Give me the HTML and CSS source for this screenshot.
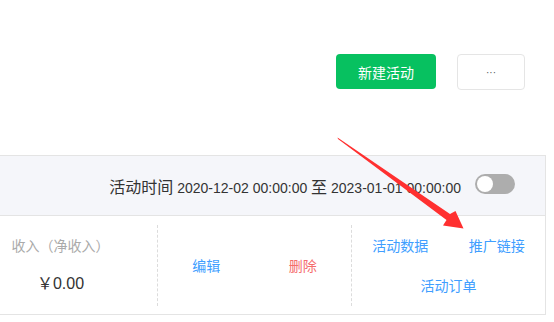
FILE: index.html
```html
<!DOCTYPE html>
<html lang="zh">
<head>
<meta charset="utf-8">
<link rel="stylesheet" href="styles.css">
</head>
<body>
<div class="page">
  <div class="toolbar">
    <button class="btn btn-primary">新建活动</button>
    <button class="btn btn-more">···</button>
  </div>
  <div class="card">
    <div class="card-head">
      <div class="time"><span class="time-label">活动时间</span> <span class="time-val">2020-12-02 00:00:00</span> <span class="time-to">至</span> <span class="time-val">2023-01-01 00:00:00</span></div>
      <div class="switch"><span class="knob"></span></div>
    </div>
    <div class="card-body">
      <div class="col col-stat">
        <div class="stat-label">收入（净收入）</div>
        <div class="stat-value">￥0.00</div>
      </div>
      <div class="col col-ops">
        <a class="link">编辑</a>
        <a class="link link-danger">删除</a>
      </div>
      <div class="col col-links">
        <div class="link-row">
          <a class="link">活动数据</a>
          <a class="link">推广链接</a>
        </div>
        <div class="link-row">
          <a class="link">活动订单</a>
        </div>
      </div>
    </div>
  </div>
  <svg class="arrow" width="554" height="322" viewBox="0 0 554 322">
    <polygon points="337.5,137.5 450,214 455.5,211 463.5,228.5 443,225.5 446.5,220 338,139" fill="#ff3030"/>
  </svg>
</div>
</body>
</html>
```

FILE: styles.css
```css
html, body {
  margin: 0;
  padding: 0;
  background: #fff;
}
body {
  font-family: "Liberation Sans", Arial, "Noto Sans CJK SC", sans-serif;
  color: #333;
  width: 554px;
  height: 322px;
  overflow: hidden;
}
.page {
  position: relative;
  width: 554px;
  height: 322px;
}
.toolbar {
  display: flex;
  justify-content: flex-end;
  align-items: flex-start;
  gap: 21px;
  padding: 54px 29px 0 0;
}
.btn {
  box-sizing: border-box;
  height: 36px;
  border-radius: 4px;
  font-family: inherit;
  font-size: 14px;
  cursor: pointer;
  padding: 0;
}
.btn-primary {
  width: 100px;
  height: 35px;
  background: #07c160;
  border: none;
  color: #fff;
}
.btn-more {
  width: 68px;
  background: #fff;
  border: 1px solid #e5e5e5;
  color: #555;
  font-size: 10px;
  letter-spacing: 0;
}
.card {
  margin: 65px 8px 0 -37px;
  border: 1px solid #e4e4e4;
}
.card-head {
  height: 59px;
  background: #f5f6fa;
  border-bottom: 1px solid #e4e4e4;
  display: flex;
  justify-content: flex-end;
  align-items: center;
  gap: 14px;
  padding-right: 30px;
}
.time {
  font-size: 14px;
  color: #333;
  white-space: nowrap;
}
.time-label,
.time-to {
  font-size: 16px;
}
.switch {
  width: 40px;
  height: 20px;
  border-radius: 10px;
  background: #adadad;
  display: flex;
  align-items: center;
  padding-left: 2px;
  box-sizing: border-box;
  margin-top: -4px;
}
.knob {
  width: 16px;
  height: 16px;
  border-radius: 50%;
  background: #fff;
}
.card-body {
  display: flex;
  height: 98px;
}
.col {
  flex: 1;
  box-sizing: border-box;
  margin: 9px 0 8px;
}
.col-stat,
.col-ops {
  border-right: 1px dashed #dcdcdc;
}
.col-stat {
  display: flex;
  flex-direction: column;
  align-items: center;
  justify-content: center;
  gap: 17px;
}
.stat-label {
  font-size: 14px;
  line-height: 20px;
  color: #aaa;
}
.stat-value {
  font-size: 16px;
  line-height: 22px;
  color: #333;
}
.col-ops {
  display: flex;
  align-items: center;
}
.col-ops .link {
  flex: 1;
  text-align: center;
}
.link {
  font-size: 14px;
  line-height: 20px;
  color: #409eff;
  cursor: pointer;
}
.link-danger {
  color: #f56c6c;
}
.col-links {
  display: flex;
  flex-direction: column;
  justify-content: center;
  gap: 20px;
}
.link-row {
  display: flex;
}
.link-row .link {
  flex: 1;
  text-align: center;
}
.arrow {
  position: absolute;
  left: 0;
  top: 0;
  pointer-events: none;
}
```
